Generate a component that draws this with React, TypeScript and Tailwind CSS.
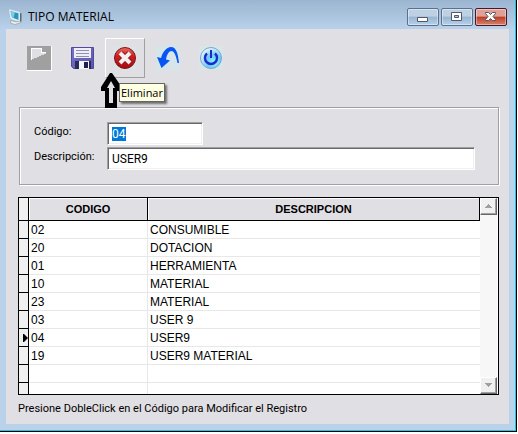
import type { ReactNode } from "react";

const records = [
  { code: "02", description: "CONSUMIBLE" },
  { code: "20", description: "DOTACION" },
  { code: "01", description: "HERRAMIENTA" },
  { code: "10", description: "MATERIAL" },
  { code: "23", description: "MATERIAL" },
  { code: "03", description: "USER 9" },
  { code: "04", description: "USER9", current: true },
  { code: "19", description: "USER9 MATERIAL" },
  { code: "", description: "" },
  { code: "", description: "" },
];

function AppIcon() {
  return (
    <svg width="16" height="16" viewBox="0 0 16 16" aria-hidden="true">
      <path d="M11 3.500l2.500 1v8l-2.500 1z" fill="#5b6a72" />
      <path d="M1.500.8l10 2.700v9L3 9.500z" fill="#eef6fb" stroke="#dfeaf0" />
      <path d="M2.500 2l8 2.300v6.700L4 8.500z" fill="#2795bd" />
      <path d="M2.500 2l4.500 1.300L5.500 9 4 8.500z" fill="#7fcbe0" />
      <path d="M3 11.500l5 1.500 4-1 1 1.500L7 15.500 2.500 14z" fill="#f2f2ee" stroke="#8b9295" strokeWidth=".6" />
    </svg>
  );
}

function BlankIcon() {
  return (
    <svg width="25" height="25" viewBox="0 0 25 25" shapeRendering="crispEdges" aria-hidden="true">
      <path d="M0 0h25v25H0z" fill="#fff" />
      <path d="M0 0h24v24H0z" fill="#a0a0a0" />
      <path d="M4 2h11v4h4v2l-4 1-4 2-3 1-4 2z" fill="#e0dfe3" />
      <path d="M4 14V2h11v1H5v11z" fill="#fff" />
      <path d="M14 3h1v3h4v1h-5z" fill="#fff" />
    </svg>
  );
}

function SaveIcon() {
  return (
    <svg width="23" height="22" viewBox="0 0 23 22" aria-hidden="true">
      <defs>
        <linearGradient id="disk" x2="1" y2="1">
          <stop stopColor="#7674c4" />
          <stop offset="1" stopColor="#5d53ad" />
        </linearGradient>
      </defs>
      <path d="M.5.5h22v21h-20l-2-2z" fill="url(#disk)" stroke="#5349a0" />
      <path d="M3 1h17v10H3z" fill="#eeeef8" />
      <path d="M5 3.500h13M5 6.500h13M5 9.500h13" stroke="#8f8eae" />
      <path d="M4 14h16v8H4z" fill="#292a55" />
      <path d="M8 14h10v8H8z" fill="#f4f4fb" />
      <path d="M13 15h4v6h-4z" fill="#20214b" />
    </svg>
  );
}

function DeleteIcon() {
  return (
    <svg width="24" height="24" viewBox="0 0 24 24" aria-hidden="true">
      <defs>
        <linearGradient id="danger" x2="0" y2="1">
          <stop stopColor="#e66b66" />
          <stop offset=".4" stopColor="#cf2023" />
          <stop offset="1" stopColor="#a60a10" />
        </linearGradient>
      </defs>
      <path d="M1 1h22v22H1z" fill="#d8e6e9" />
      <circle cx="12" cy="12" r="10.500" fill="url(#danger)" stroke="#7e1518" />
      <path d="M7.500 7.500l9 9M16.500 7.500l-9 9" stroke="#8a181b" strokeWidth="6" />
      <path d="M7 7l10 10M17 7L7 17" stroke="#f8eeee" strokeWidth="4" />
    </svg>
  );
}

function UndoIcon() {
  return (
    <svg width="24" height="24" viewBox="0 0 24 24" aria-hidden="true">
      <path d="M0 0h24v24H0z" fill="#d5e5ea" />
      <path d="M1 11l4 1C7 5 11 1 15 1c5 0 7 6 8 16h-1.500C20 9 18 5 15.500 5 13 5 11 8 10 13.500l4 1L5.500 22z" fill="#0755f2" />
    </svg>
  );
}

function PowerIcon() {
  return (
    <svg width="24" height="24" viewBox="0 0 24 24" aria-hidden="true">
      <defs>
        <radialGradient id="power" cx=".65" cy=".7" r=".7">
          <stop stopColor="#8df6ff" />
          <stop offset=".5" stopColor="#6fc8f8" />
          <stop offset="1" stopColor="#e3f4fc" />
        </radialGradient>
      </defs>
      <path d="M0 0h24v24H0z" fill="#d8e6e9" />
      <circle cx="12" cy="12" r="10.500" fill="url(#power)" stroke="#7ba3c6" />
      <path d="M8 7.500a6 6 0 1 0 8 0" fill="none" stroke="#1c2cc8" strokeWidth="2.400" />
      <path d="M12 4v8" stroke="#1c2cc8" strokeWidth="2" />
    </svg>
  );
}

function CaptionButton({ label, danger, children }: { label: string; danger?: boolean; children: ReactNode }) {
  const tone = danger
    ? "border-[#49172a] bg-linear-to-b from-[#e0a096] from-45% via-[#b93b27] via-50% to-[#d98167]"
    : "border-[#5c708b] bg-linear-to-b from-[#bdd0e4] from-45% via-[#98b4d1] via-50% to-[#b6d1ea]";
  return (
    <button type="button" aria-label={label} className={`flex h-[18px] w-8 items-center justify-center rounded-xs border shadow-[inset_0_0_0_1px_#ffffff66] ${tone}`}>
      {children}
    </button>
  );
}

function ToolButton({ label, hot, children }: { label: string; hot?: boolean; children: ReactNode }) {
  return (
    <button type="button" aria-label={label} className={`flex h-10 w-10 items-center justify-center border ${hot ? "border-t-white border-r-[#a0a0a0] border-b-[#a0a0a0] border-l-white" : "border-transparent"}`}>
      {children}
    </button>
  );
}

function ScrollButton({ label, down }: { label: string; down?: boolean }) {
  return (
    <button type="button" aria-label={label} className="flex h-[17px] w-full items-center justify-center border border-t-white border-r-[#696969] border-b-[#696969] border-l-white bg-[#f0f0f0] shadow-[inset_-1px_-1px_0_#a0a0a0]">
      <svg width="8" height="5" viewBox="0 0 8 5" shapeRendering="crispEdges" aria-hidden="true">
        {down ? <path d="M0 0h7v1H6v1H5v1H4v1H3V3H2V2H1V1H0z" fill="#a0a0a0" /> : <path d="M3 0h1v1h1v1h1v1h1v1H0V3h1V2h1V1h1z" fill="#a0a0a0" />}
      </svg>
    </button>
  );
}

const fieldClass = "h-[23px] border border-t-[#a0a0a0] border-r-white border-b-white border-l-[#a0a0a0] bg-white pl-1 text-[12px] text-black outline-none shadow-[inset_1px_1px_0_#696969,inset_-1px_-1px_0_#f0f0f0]";

export default function App() {
  return (
    <div className="bg-white pr-px pb-[2px] font-[Roboto,'Liberation_Sans',sans-serif] text-[11px] text-black">
      <div className="border-r border-b border-black">
        <main className="border-r border-b border-[#1fc5e2] bg-[#bad1ea] pr-[6px] pb-[6px] pl-[6px]">
          <header className="-mx-[6px] flex h-[29px] items-start justify-between bg-linear-to-b from-[#9bb5d0] to-[#b9d1ea] px-[8px]">
            <div className="flex items-center gap-[4px] pt-[8px]">
              <AppIcon />
              <h1 className="font-['Open_Sans','Noto_Sans',sans-serif] text-[12px] leading-[18px]">TIPO MATERIAL</h1>
            </div>
            <div className="flex gap-[2px] pt-[8px]">
              <CaptionButton label="Minimizar">
                <svg width="12" height="12" aria-hidden="true"><path d="M.5 6.500h10v4H.5z" fill="#fff" stroke="#535666" /></svg>
              </CaptionButton>
              <CaptionButton label="Maximizar">
                <svg width="12" height="12" aria-hidden="true"><path d="M.5 1.500h10v8H.5z" fill="#fff" stroke="#535666" /><path d="M3.500 4.500h4v2h-4z" fill="#acc6df" stroke="#535666" /></svg>
              </CaptionButton>
              <CaptionButton label="Cerrar" danger>
                <svg width="12" height="12" aria-hidden="true"><path d="M.5 1.500h3l2 2 2-2h3v1L8 5.500l2.500 3v1h-3l-2-2-2 2h-3v-1L3 5.500l-2.500-3z" fill="#fff" stroke="#535666" /></svg>
              </CaptionButton>
            </div>
          </header>

          <div className="bg-[#e0dfe3] pr-[10px] pb-[8px] pl-3">
            <div className="relative flex gap-[3px] pt-[9px] pl-px">
              <ToolButton label="Nuevo"><BlankIcon /></ToolButton>
              <ToolButton label="Guardar"><SaveIcon /></ToolButton>
              <ToolButton label="Eliminar" hot><DeleteIcon /></ToolButton>
              <ToolButton label="Deshacer"><UndoIcon /></ToolButton>
              <ToolButton label="Salir"><PowerIcon /></ToolButton>
              <svg className="absolute top-[44px] left-[83px]" width="20" height="35" viewBox="0 0 20 35" aria-hidden="true">
                <path d="M9 0h2l9 13v5h-4v17H4V18H0v-4z" fill="#000" />
                <path d="M10 8l4 7h-2v15H8V15H6z" fill="#e0dfe3" />
              </svg>
              <div role="tooltip" className="absolute top-[54px] left-[101px] border border-[#646464] bg-[#ffffe1] px-px font-['Open_Sans','Noto_Sans',sans-serif] text-[11px] leading-[17px] shadow-[2px_2px_2px_#00000080]">
                Eliminar
              </div>
            </div>

            <form className="mt-[29px] ml-px grid grid-cols-[73px_1fr] items-center gap-y-[2px] border border-[#a0a0a0] py-[14px] pr-[23px] pl-[14px] shadow-[inset_1px_1px_0_#fff,1px_1px_0_#fff]" onSubmit={(event) => event.preventDefault()}>
              <label htmlFor="codigo" className="pb-[2px]">Código:</label>
              <input id="codigo" defaultValue="04" className={`${fieldClass} w-24 selection:bg-[#0078d7] selection:text-white`} autoFocus onFocus={(event) => event.currentTarget.select()} />
              <label htmlFor="descripcion" className="pb-[2px]">Descripción:</label>
              <input id="descripcion" defaultValue="USER9" className={`${fieldClass} w-full`} />
            </form>

            <div className="mt-3 flex h-[198px] overflow-hidden border border-black bg-white font-['Liberation_Sans',Arial,sans-serif]">
              <table className="w-full table-fixed border-separate border-spacing-0 self-start text-[12px]">
                <colgroup>
                  <col className="w-[10px]" />
                  <col className="w-[119px]" />
                  <col />
                </colgroup>
                <thead className="text-[11px]">
                  <tr className="h-[23px] bg-[#e0dfe3]">
                    <td className="border-r border-b border-black bg-[#f0f0f0] p-0" />
                    <th scope="col" className="border-r border-b border-black p-0 pt-px shadow-[inset_1px_1px_0_#fff]">CODIGO</th>
                    <th scope="col" className="border-r border-b border-black p-0 pt-px shadow-[inset_1px_1px_0_#fff]">DESCRIPCION</th>
                  </tr>
                </thead>
                <tbody>
                  {records.map((record, index) => (
                    <tr key={index} className="h-[18px]">
                      <td className="border-r border-b border-black bg-[#f0f0f0] p-0">
                        {record.current && (
                          <svg className="mt-px ml-auto" width="5" height="8" viewBox="0 0 5 8" role="img" aria-label="Registro actual"><path d="M0 0h1l4 4-4 4H0z" /></svg>
                        )}
                      </td>
                      <td className="border-r border-b border-[#e8e8e8] p-0 pt-px pl-[2px] leading-[16px]">{record.code}</td>
                      <td className="border-b border-[#e8e8e8] p-0 pt-px pl-[2px] leading-[16px]">{record.description}</td>
                    </tr>
                  ))}
                </tbody>
              </table>
              <div className="flex w-[18px] shrink-0 flex-col justify-between border-r border-white bg-[#f7f7f7]">
                <ScrollButton label="Subir" />
                <ScrollButton label="Bajar" down />
              </div>
            </div>
            <p className="mt-[6px] leading-[15px]">Presione DobleClick en el Código para Modificar el Registro</p>
          </div>
        </main>
      </div>
    </div>
  );
}
